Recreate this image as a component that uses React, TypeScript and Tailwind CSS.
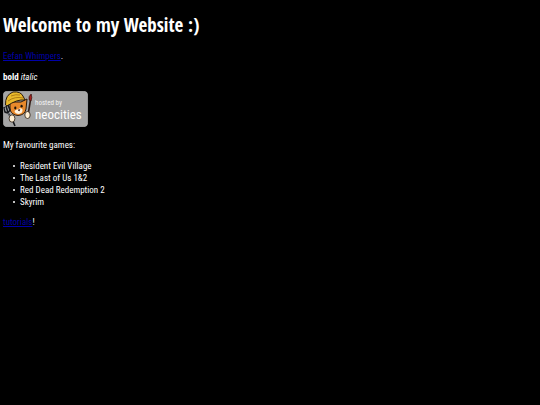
const games = ['Resident Evil Village', 'The Last of Us 1&2', 'Red Dead Redemption 2', 'Skyrim'];

const NeocitiesBadge = () => (
  <svg viewBox="0 0 85 36" className="block h-[36px] w-[85px]" role="img" aria-label="hosted by neocities">
    <rect x="0.3" y="0.3" width="84.4" height="35.4" rx="4" fill="#a6a6a6" stroke="#b8b8b8" strokeWidth="0.6" />

    {/* cat */}
    <path d="M7 11 L7 19 Q9 24 15 24.5 Q22 24 23 18 L24 8 L18 11 Z" fill="#e98a2c" stroke="#2a1a0c" strokeWidth="1" />
    <path d="M11.5 20 Q13 18 15 18.5 Q18 16 19.5 18.5 Q20 22 16 23 Q12 23 11.5 20 Z" fill="#fff3df" />
    <ellipse cx="12.3" cy="17" rx="1.1" ry="1.4" fill="#1c120a" />
    <ellipse cx="18.6" cy="15.2" rx="1.1" ry="1.4" fill="#1c120a" />
    <path d="M15 19 L17 18.6 L16.2 20 Z" fill="#4a2414" stroke="#4a2414" strokeWidth="0.6" />

    {/* hat */}
    <path d="M2.5 14 Q2 4 10 1 Q18 0 20.5 6 L22 9 Q14 8 4 15 Z" fill="#e8b92c" stroke="#2a1a0c" strokeWidth="1" />
    <path d="M5 10 Q12 5 20 7 M8 5 Q13 3 17 4" fill="none" stroke="#a87412" strokeWidth="0.9" />

    {/* fork */}
    <path d="M1 16 L2 21 Q5 23 7 19 L5 14 M3 15 L5 22 L9 28 L12 35" fill="none" stroke="#16181c" strokeWidth="1.6" />
    <path d="M2 17 L3 20 M5 22 L8 27" stroke="#a9b4be" strokeWidth="0.6" />
    <ellipse cx="9" cy="27.5" rx="2.9" ry="3.7" fill="#fff0d5" stroke="#2a1a0c" strokeWidth="0.8" />

    {/* brush */}
    <path d="M27.5 9 L25 24" stroke="#33201a" strokeWidth="1.6" />
    <path d="M26.2 9 Q25 5.5 28.2 3 Q29.5 7 28 10 Z" fill="#a5201c" stroke="#34100c" strokeWidth="0.7" />
    <ellipse cx="24.5" cy="24" rx="2.7" ry="3.5" fill="#fff0d5" stroke="#2a1a0c" strokeWidth="0.8" />

    <text x="32" y="14" fontSize="7" fill="#f4f4f4">hosted by</text>
    <text x="32" y="28" fontSize="13" fill="#ffffff">neocities</text>
  </svg>
);

const App = () => {
  return (
    <main className="min-h-screen bg-black px-[3px] pt-3 font-['Roboto_Condensed','Liberation_Sans_Narrow','DejaVu_Sans_Condensed',sans-serif] text-[9px] leading-[12px] text-white">
      <h1 className="font-['Open_Sans_Condensed','Open_Sans',sans-serif] text-[19px] leading-[26px] font-bold">
        Welcome to my Website :)
      </h1>

      <p className="mt-3">
        <a href="#whimpers" className="text-[#0000a8] underline">Eefan Whimpers</a>.
      </p>

      <p className="mt-[9px]">
        <strong>bold</strong> <em>italic</em>
      </p>

      <a href="#neocities" className="mt-2 inline-block align-top">
        <NeocitiesBadge />
      </a>

      <p className="mt-3">My favourite games:</p>

      <ul className="mt-[9px] pl-[10px]">
        {games.map((game) => (
          <li key={game} className="flex items-center gap-[5px] before:size-[2px] before:rounded-full before:bg-white">
            {game}
          </li>
        ))}
      </ul>

      <p className="mt-2">
        <a href="#tutorials" className="text-[#0000a8] underline">tutorials</a>!
      </p>
    </main>
  );
};

export default App;
